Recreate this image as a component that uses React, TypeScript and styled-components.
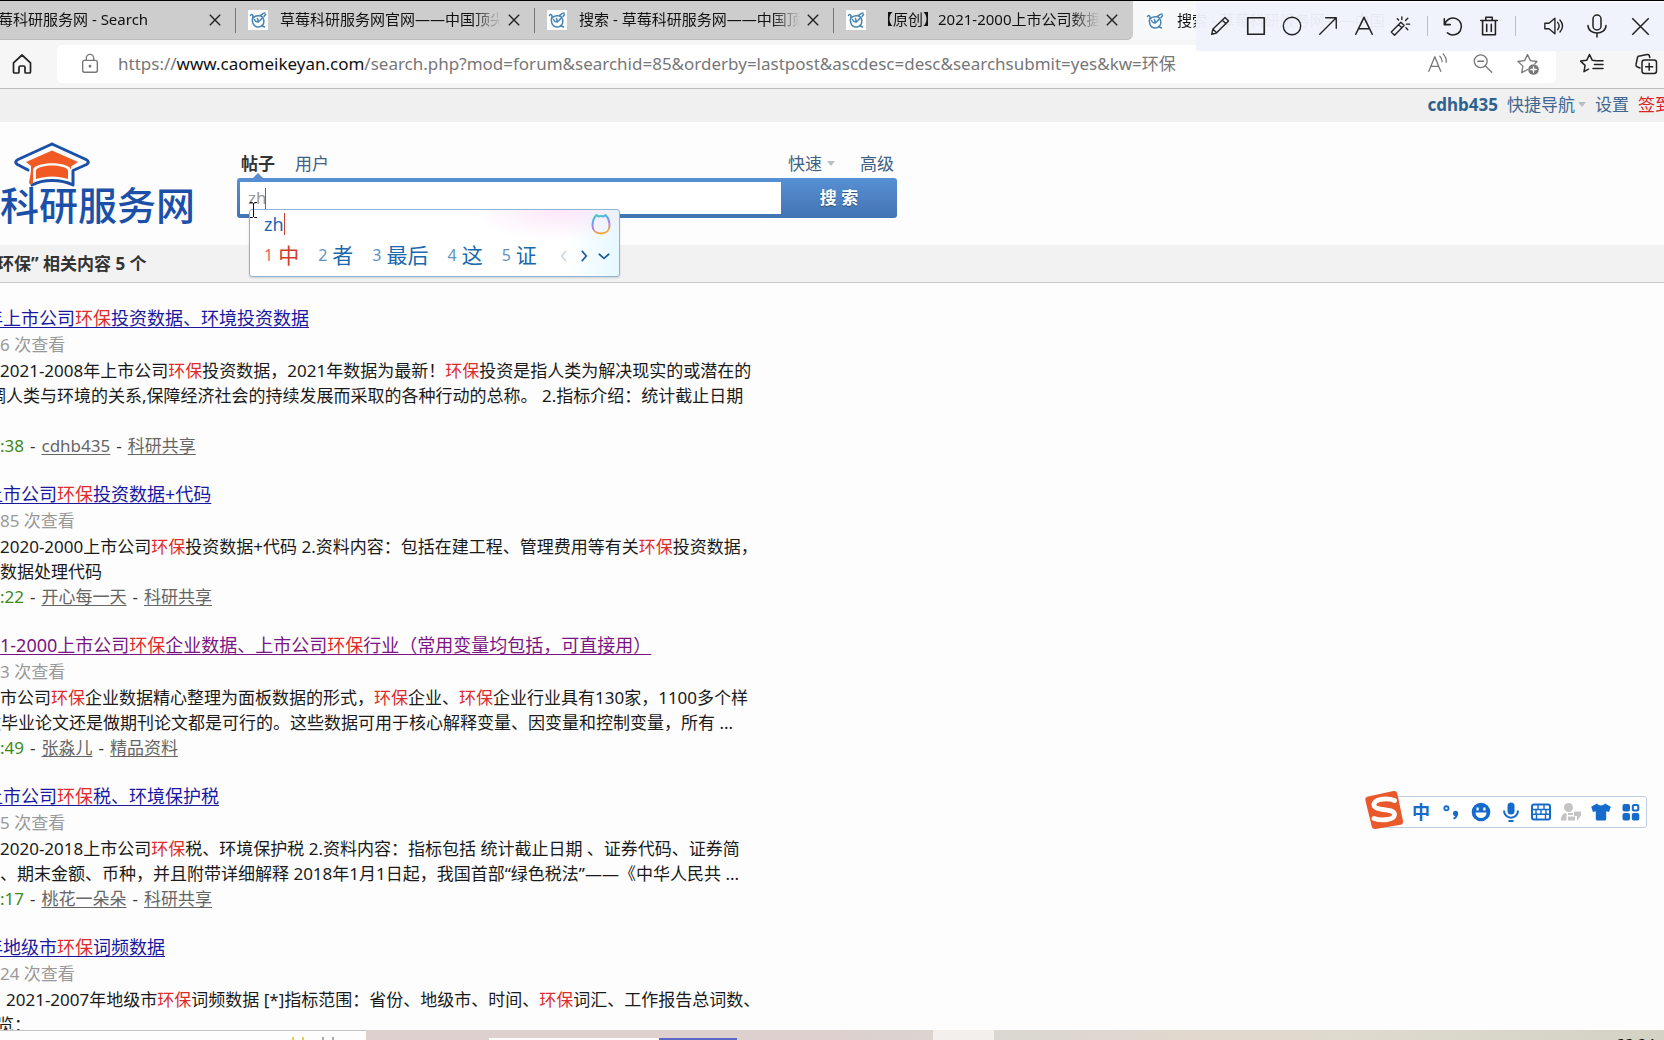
import React from "react";
import styled, { createGlobalStyle } from "styled-components";

const GlobalStyle = createGlobalStyle`
  *, *::before, *::after { box-sizing: border-box; }
  body {
    margin: 0;
    background: #fdfdfd;
    color: #1a1a1a;
    font: 17px/25px "Noto Sans", "Noto Sans CJK SC", sans-serif;
  }
  button, input { font: inherit; color: inherit; }
  button { padding: 0; border: 0; background: none; cursor: pointer; }
  svg { display: block; }
`;

/* ---------- shell ---------- */

const Shell = styled.div`
  display: flex;
  flex-direction: column;
  height: 100vh;
  overflow: hidden;
  position: relative;
`;

/* ---------- browser tabs ---------- */

const TabStrip = styled.div`
  display: flex;
  height: 40px;
  flex: none;
  background: #f7f8fa;
  border-top: 1px solid #000;
`;

const Tabs = styled.div`
  display: flex;
  background: #cdcdcd;
  border-bottom: 1px solid #bdbdbd;
  border-radius: 0 0 6px 0;
`;

const Tab = styled.div<{ $first?: boolean; $last?: boolean }>`
  display: flex;
  align-items: center;
  width: ${(p) => (p.$first ? 236 : 299)}px;
  padding: ${(p) => (p.$first ? "0 12px 0 0" : "0 12px")};
  position: relative;
  &::after {
    content: "";
    width: 1px;
    height: 25px;
    position: absolute;
    right: 0;
    top: 7px;
    background: ${(p) => (p.$last ? "transparent" : "#777")};
  }
`;

const ActiveTab = styled(Tab)`
  flex: 1;
  width: auto;
  min-width: 0;
`;

const TabTitle = styled.span<{ $cut?: number }>`
  flex: 1;
  min-width: 0;
  margin-left: ${(p) => (p.$cut ? 0 : 12)}px;
  padding-bottom: 2px;
  text-indent: -${(p) => p.$cut ?? 0}px;
  overflow: hidden;
  white-space: nowrap;
  font-size: 15px;
  line-height: 24px;
  color: #111;
  mask-image: linear-gradient(to right, #000 calc(100% - 28px), transparent);
`;

const CloseButton = styled.button`
  display: grid;
  place-items: center;
  width: 18px;
  height: 18px;
  margin-left: 4px;
  color: #222;
`;

const FaviconBox = styled.span`
  flex: none;
  width: 20px;
  height: 20px;
  background: #fdfdfd;
`;

const Favicon = () => (
  <FaviconBox>
    <svg width="20" height="20" viewBox="0 0 20 20" fill="none" stroke="#4585b5" strokeWidth="1.5" strokeLinecap="round">
      <path d="M2.500 5.500c1-1.800 2.800-1 2.500 1C3.500 10.500 4.500 16.500 9.500 17c4.500.4 6.700-3 6.300-6.500-.3-2.500-2-4.500-4.500-4.700C9 5.500 6.500 6 5 8" />
      <path d="M12 5.500c1.500.3 2-2.500 5-2.500M16 6.500l1.500-2M6.500 9.500c1 2.500 3 3 5 1.500 1-.8 1.500-2 2.500-2.500M9.500 8.500l1 3.500M13.500 15.500l3 1.500" />
    </svg>
  </FaviconBox>
);

const Cross = ({ size = 12, width = 1.4 }: { size?: number; width?: number }) => (
  <svg width={size} height={size} viewBox="0 0 12 12" stroke="currentColor" strokeWidth={(width * 12) / size} fill="none">
    <path d="M.8.8l10.400 10.400M11.200.8L.8 11.200" />
  </svg>
);

/* ---------- address bar ---------- */

const Toolbar = styled.div`
  display: flex;
  align-items: center;
  flex: none;
  height: 49px;
  padding: 0 6px 0 10px;
  background: #f6f6f7;
  border-bottom: 1px solid #bcbcbc;
`;

const IconButton = styled.button<{ $muted?: boolean }>`
  display: grid;
  place-items: center;
  flex: none;
  width: 24px;
  height: 24px;
  color: ${(p) => (p.$muted ? "#777" : "#222")};
`;

const Address = styled.div`
  display: flex;
  align-items: center;
  flex: 1;
  min-width: 0;
  height: 38px;
  margin: 0 24px 0 23px;
  padding: 0 16px 0 21px;
  gap: 21px;
  border-radius: 5px;
  background: #fff;
`;

const Url = styled.span`
  flex: 1;
  min-width: 0;
  margin-left: -5px;
  padding-bottom: 2px;
  overflow: hidden;
  white-space: nowrap;
  color: #777;
  b { font-weight: 400; color: #111; }
`;

const RightTools = styled.div`
  display: flex;
  gap: 30px;
`;

/* ---------- annotation toolbar ---------- */

const Annotator = styled.div`
  position: absolute;
  top: 3px;
  right: 0;
  display: flex;
  align-items: center;
  width: 468px;
  height: 48px;
  padding: 0 10px 2px 12px;
  background: rgba(239, 243, 251, 0.96);
`;

const ToolGroup = styled.div<{ $wide?: boolean }>`
  display: flex;
  gap: ${(p) => (p.$wide ? 19 : 12)}px;
`;

const ToolDivider = styled.span<{ $wide?: boolean }>`
  width: 1px;
  height: 20px;
  margin: ${(p) => (p.$wide ? "0 26px 0 14px" : "0 13px 0 15px")};
  background: #b9bfcc;
`;

const Stroke = ({ children, size = 22, w = 1.5 }: { children: React.ReactNode; size?: number; w?: number }) => (
  <svg width={size} height={size} viewBox="0 0 24 24" fill="none" stroke="currentColor" strokeWidth={w} strokeLinecap="round" strokeLinejoin="round">
    {children}
  </svg>
);

/* ---------- site ---------- */

const UserBar = styled.nav`
  display: flex;
  align-items: center;
  justify-content: flex-end;
  gap: 9px;
  flex: none;
  height: 33px;
  margin-right: -8px;
  padding-bottom: 2px;
  background: #f0f0f0;
  overflow: hidden;
`;

const NavLink = styled.a<{ $strong?: boolean; $alert?: boolean }>`
  display: inline-flex;
  align-items: center;
  gap: 3px;
  white-space: nowrap;
  text-decoration: none;
  font-weight: ${(p) => (p.$strong ? 700 : 400)};
  color: ${(p) => (p.$alert ? "#d8232a" : p.$strong ? "#2d628f" : "#3f6790")};
`;

const Caret = styled.i`
  border: 4px solid transparent;
  border-top: 5px solid #b8bec4;
  border-bottom: 0;
`;

const Header = styled.header`
  display: flex;
  flex: none;
  height: 123px;
`;

const Logo = styled.a`
  width: 237px;
  flex: none;
  padding-top: 20px;
  color: #1c50a8;
  text-decoration: none;
  overflow: hidden;
  svg { margin-left: 14px; }
`;

const LogoName = styled.span`
  display: block;
  white-space: nowrap;
  font-size: 39px;
  line-height: 34px;
  font-weight: 500;
`;

const SearchForm = styled.form`
  position: relative;
  width: 660px;
  padding-top: 29px;
`;

const SearchTabs = styled.div`
  display: flex;
  gap: 20px;
  height: 27px;
  padding: 0 3px 0 4px;
`;

const SearchTab = styled.button<{ $active?: boolean; $menu?: boolean }>`
  position: relative;
  display: flex;
  align-items: center;
  gap: 5px;
  height: 24px;
  padding-right: ${(p) => (p.$menu ? 5 : 0)}px;
  font-weight: ${(p) => (p.$active ? 700 : 400)};
  color: ${(p) => (p.$active ? "#333" : "#3f5f83")};
  &::after {
    content: "";
    display: ${(p) => (p.$active ? "block" : "none")};
    position: absolute;
    left: 12px;
    bottom: -3px;
    border: 5px solid transparent;
    border-bottom: 5px solid #5a8cc8;
    border-top: 0;
  }
`;

const Spacer = styled.span`
  flex: 1;
`;

const SearchBox = styled.div`
  display: flex;
  height: 40px;
  border-radius: 3px;
  padding: 4px 0 4px 3px;
  background: linear-gradient(#5790d4, #4274b3);
`;

const SearchInput = styled.input`
  flex: 1;
  min-width: 0;
  padding: 0 8px 2px;
  border: 0;
  outline: 0;
  background: #fff;
  color: #999;
`;

const SearchButton = styled.button`
  width: 116px;
  margin: -4px 0;
  padding-bottom: 2px;
  font-weight: 700;
  color: #fff;
  text-shadow: 0 1px 1px rgba(0, 0, 0, 0.4);
`;

const TextCaret = styled.i<{ $color: string }>`
  width: 1px;
  height: 22px;
  background: ${(p) => p.$color};
`;

const InputCaret = styled(TextCaret)`
  position: absolute;
  left: 28px;
  top: 66px;
`;

const MouseBeam = styled.svg`
  position: absolute;
  left: 12px;
  top: 80px;
`;

const ImePanel = styled.div`
  position: absolute;
  left: 12px;
  top: 87px;
  width: 371px;
  height: 68px;
  padding: 1px 8px 0 14px;
  border: 1px solid #8fb4d6;
  border-radius: 3px;
  background:
    radial-gradient(ellipse 90px 30px at 84% 0, rgba(250, 220, 246, 0.7), transparent),
    linear-gradient(to left, #e6f8ff, #fff 14%);
  box-shadow: 0 1px 2px rgba(0, 0, 0, 0.15);
`;

const ImeRow = styled.div`
  display: flex;
  align-items: center;
  height: 26px;
  font-size: 18px;
  color: #1a66b5;
`;

const Candidates = styled.ol`
  display: flex;
  align-items: center;
  gap: 19px;
  height: 36px;
  margin: 0;
  padding: 0;
  list-style: none;
`;

const Candidate = styled.li<{ $first?: boolean }>`
  display: flex;
  align-items: center;
  gap: 5px;
  font-size: 21px;
  white-space: nowrap;
  color: ${(p) => (p.$first ? "#d23c2a" : "#1a68ae")};
  small {
    font-size: 16px;
    color: ${(p) => (p.$first ? "#e2695a" : "#5e93c0")};
  }
`;

const Pager = styled.li`
  display: flex;
  gap: 5px;
  margin-left: auto;
`;

const PagerButton = styled.button<{ $dim?: boolean }>`
  width: 15px;
  height: 12px;
  display: grid;
  place-items: center;
  color: ${(p) => (p.$dim ? "#c6d6e4" : "#1f5f9c")};
`;

const Summary = styled.h2<{ $cut: number }>`
  flex: none;
  height: 38px;
  margin: 0;
  border-bottom: 1px solid #c6c6c6;
  background: #f2f2f2;
  font-size: 17px;
  line-height: 37px;
  color: #333;
  white-space: nowrap;
  text-indent: -${(p) => p.$cut}px;
`;

/* ---------- results ---------- */

const Results = styled.main`
  flex: 1;
  min-height: 0;
  padding-top: 22px;
  overflow: hidden;
`;

const Result = styled.article`
  margin-bottom: 23px;
  white-space: nowrap;
`;

const ResultTitle = styled.h3<{ $cut: number }>`
  margin: 0;
  font-size: 18px;
  line-height: 27px;
  font-weight: 400;
  text-indent: -${(p) => p.$cut}px;
`;

const TitleLink = styled.a<{ $visited?: boolean }>`
  color: ${(p) => (p.$visited ? "#7a1583" : "#1a17a0")};
  text-underline-offset: 2px;
`;

const Views = styled.p`
  margin: 0;
  line-height: 26px;
  color: #999;
`;

const Line = styled.p<{ $cut?: number }>`
  margin: 0;
  min-height: 25px;
  text-indent: ${(p) => -(p.$cut ?? 0)}px;
`;

const Mark = styled.em`
  font-style: normal;
  color: #dd2c2c;
`;

const Meta = styled.p`
  display: flex;
  gap: 6px;
  margin: 0;
  color: #333;
  time { color: #3c8a14; }
  a { color: #666; text-underline-offset: 2px; }
`;

type Text = { t: string; cut?: number };
type Item = {
  title: Text;
  visited?: boolean;
  views: string;
  lines: Text[];
  time: string;
  author: string;
  board: string;
};

const items: Item[] = [
  {
    title: { t: "年上市公司*环保*投资数据、环境投资数据", cut: 15 },
    views: "6 次查看",
    lines: [
      { t: "2021-2008年上市公司*环保*投资数据，2021年数据为最新！*环保*投资是指人类为解决现实的或潜在的" },
      { t: "调人类与环境的关系,保障经济社会的持续发展而采取的各种行动的总称。 2.指标介绍：统计截止日期", cut: 11 },
      { t: "" },
    ],
    time: ":38",
    author: "cdhb435",
    board: "科研共享",
  },
  {
    title: { t: "上市公司*环保*投资数据+代码", cut: 15 },
    views: "85 次查看",
    lines: [
      { t: "2020-2000上市公司*环保*投资数据+代码 2.资料内容：包括在建工程、管理费用等有关*环保*投资数据，" },
      { t: "数据处理代码" },
    ],
    time: ":22",
    author: "开心每一天",
    board: "科研共享",
  },
  {
    title: { t: "1-2000上市公司*环保*企业数据、上市公司*环保*行业（常用变量均包括，可直接用）", cut: 0 },
    visited: true,
    views: "3 次查看",
    lines: [
      { t: "市公司*环保*企业数据精心整理为面板数据的形式，*环保*企业、*环保*企业行业具有130家，1100多个样" },
      { t: "做毕业论文还是做期刊论文都是可行的。这些数据可用于核心解释变量、因变量和控制变量，所有 ...", cut: 16 },
    ],
    time: ":49",
    author: "张淼儿",
    board: "精品资料",
  },
  {
    title: { t: "上市公司*环保*税、环境保护税", cut: 15 },
    views: "5 次查看",
    lines: [
      { t: "2020-2018上市公司*环保*税、环境保护税 2.资料内容：指标包括 统计截止日期 、证券代码、证券简" },
      { t: "、期末金额、币种，并且附带详细解释 2018年1月1日起，我国首部“绿色税法”——《中华人民共 ..." },
    ],
    time: ":17",
    author: "桃花一朵朵",
    board: "科研共享",
  },
  {
    title: { t: "年地级市*环保*词频数据", cut: 15 },
    views: "24 次查看",
    lines: [
      { t: "2021-2007年地级市*环保*词频数据 [*]指标范围：省份、地级市、时间、*环保*词汇、工作报告总词数、", cut: -6 },
      { t: "览：", cut: 3 },
    ],
    time: "",
    author: "",
    board: "",
  },
];

/* Wraps every *环保* in the highlight colour. */
const highlight = (text: string) =>
  text.split("*环保*").flatMap((part, i) => (i === 0 ? [part] : [<Mark key={i}>环保</Mark>, part]));

/* ---------- input-method bar and taskbar ---------- */

const ImeBar = styled.div`
  position: absolute;
  right: 17px;
  top: 796px;
  display: flex;
  align-items: center;
  gap: 8px;
  width: 272px;
  height: 32px;
  padding: 0 4px 0 34px;
  border: 1px solid #bcd0e4;
  border-radius: 3px;
  background: #fff;
  color: #146bcb;
`;

const ImeLogo = styled.svg`
  position: absolute;
  left: -12px;
  top: -7px;
`;

const ImeButton = styled.button<{ $off?: boolean }>`
  display: grid;
  place-items: center;
  flex: none;
  width: 22px;
  height: 24px;
  font-weight: 700;
  font-size: 18px;
  color: ${(p) => (p.$off ? "#c4c4c4" : "inherit")};
`;

const Taskbar = styled.footer`
  display: flex;
  flex: none;
  height: 10px;
  overflow: hidden;
  background: linear-gradient(to right, #ddd0ce 22%, #ddd0ce 50%, #dad7d2 60%, #e2d8ce 72%, #dedbce 82%, #d3d2c3);
`;

const TaskSearch = styled.div`
  display: flex;
  justify-content: flex-end;
  align-items: flex-end;
  gap: 8px;
  width: 366px;
  padding-right: 32px;
  border-top: 1px solid #c4c4c4;
  background: #fdfdfd;
`;

const Spark = styled.i<{ $color: string }>`
  width: 2px;
  height: 3px;
  background: ${(p) => p.$color};
`;

const TaskThumb = styled.div`
  display: flex;
  align-items: flex-end;
  margin-left: 123px;
  &::before { content: ""; width: 170px; height: 2px; background: #fdfdfd; }
  &::after { content: ""; width: 78px; height: 2px; background: #5a67c6; }
`;

const TaskActive = styled.div`
  width: 61px;
  margin-left: 196px;
  background: #f2efed;
`;

const Clock = styled.time`
  margin: 5px 9px 0 auto;
  font-size: 15px;
  line-height: 16px;
  color: #111;
`;

/* ---------- app ---------- */

export default function App() {
  return (
    <Shell lang="zh-CN">
      <GlobalStyle />
      <TabStrip>
        <Tabs>
          <Tab $first>
            <TabTitle $cut={2}>莓科研服务网 - Search</TabTitle>
            <CloseButton aria-label="关闭标签页"><Cross /></CloseButton>
          </Tab>
          {["草莓科研服务网官网——中国顶尖", "搜索 - 草莓科研服务网——中国顶", "【原创】2021-2000上市公司数据"].map((title, i) => (
            <Tab key={title} $last={i === 2}>
              <Favicon />
              <TabTitle>{title}</TabTitle>
              <CloseButton aria-label="关闭标签页"><Cross /></CloseButton>
            </Tab>
          ))}
        </Tabs>
        <ActiveTab $last>
          <Favicon />
          <TabTitle>搜索 - 草莓科研服务网——中国</TabTitle>
        </ActiveTab>
      </TabStrip>

      <Toolbar>
        <IconButton aria-label="主页">
          <Stroke size={24} w={1.7}>
            <path d="M3.500 10.800L12 3l8.500 7.800V20a1 1 0 0 1-1 1H16a1 1 0 0 1-1-1v-4.500a1.500 1.500 0 0 0-1.500-1.500h-3A1.500 1.500 0 0 0 9 15.500V20a1 1 0 0 1-1 1H4.500a1 1 0 0 1-1-1z" />
          </Stroke>
        </IconButton>
        <Address>
          <IconButton aria-label="网站信息" $muted>
            <Stroke size={22} w={1.5}>
              <rect x="4" y="8" width="16" height="13" rx="2" />
              <path d="M8 8V5.500a4 4 0 0 1 8 0V8" />
              <circle cx="12" cy="14.500" r=".8" fill="currentColor" />
            </Stroke>
          </IconButton>
          <Url>
            https://<b>www.caomeikeyan.com</b>/search.php?mod=forum&amp;searchid=85&amp;orderby=lastpost&amp;ascdesc=desc&amp;searchsubmit=yes&amp;kw=环保
          </Url>
          <IconButton aria-label="大声朗读" $muted>
            <Stroke size={22} w={1.4}>
              <path d="M2 20L8.500 4 15 20M4.400 14.500h8.200M14 3.500c1.800 1.500 2.500 3.500 2.500 6M17.500 1c2.500 2.500 3.700 5.500 3.500 9" />
            </Stroke>
          </IconButton>
          <IconButton aria-label="缩小" $muted>
            <Stroke size={22} w={1.4}>
              <circle cx="9.500" cy="9" r="7" />
              <path d="M14.700 14.200L21.500 21M6.300 9h6.400" />
            </Stroke>
          </IconButton>
          <IconButton aria-label="添加到收藏夹" $muted>
            <Stroke size={24} w={1.3}>
              <path d="M11.500 17.500l-5.800 3.200 1.200-6.600-4.900-4.600 6.600-.9L11.500 2.500l2.900 6.100 6.600.9-2 2" />
              <circle cx="17.500" cy="17.500" r="5.300" fill="#777" stroke="none" />
              <path d="M17.500 14.800v5.400M14.800 17.500h5.400" stroke="#fff" />
            </Stroke>
          </IconButton>
        </Address>
        <RightTools>
          <IconButton aria-label="收藏夹">
            <Stroke size={24} w={1.5}>
              <path d="M16 8.800l-3.700-.5L9.500 2.500 6.700 8.300l-6.200.8 4.600 4.300L4 19.700l4.500-2.500M14.500 12.500H23M13 16.500h10M17 8.800h6" />
            </Stroke>
          </IconButton>
          <IconButton aria-label="集锦">
            <Stroke size={24} w={1.5}>
              <path d="M6 16l-3-1.200A2 2 0 0 1 2 12.500L3.500 5.500A2 2 0 0 1 5.800 4L13 2.500a2 2 0 0 1 2.400 1.500l.4 1.500" />
              <rect x="8" y="8" width="14.500" height="13.500" rx="2.500" />
              <path d="M15.200 11.200v7M11.700 14.700h7" />
            </Stroke>
          </IconButton>
        </RightTools>
      </Toolbar>

      <UserBar>
        <NavLink href="#" $strong>cdhb435</NavLink>
        <NavLink href="#">快捷导航<Caret /></NavLink>
        <NavLink href="#">设置</NavLink>
        <NavLink href="#" $alert>签到</NavLink>
      </UserBar>

      <Header>
        <Logo href="#">
          <svg width="76" height="46" viewBox="0 0 76 46" fill="none">
            <path d="M38 2L4 17.500c-3 1.500-3 3.500-.5 5L14 28M38 2l34 15.500c3 1.500 3 3.500.5 5L59 28.500V43c-12-6-30-6-41 0" stroke="#1c50a8" strokeWidth="3" strokeLinejoin="round" strokeLinecap="round" />
            <path d="M38 8.500L12 20l5 4v5l-2 12c1.500 2 3 1.500 4-.5L19 28c1-9 37-9 38 0v-3.500L64 20z" fill="#f15a22" />
            <path d="M22 28c4-6 28-6 32 0v9c-10-3.500-22-3.500-32 0z" fill="#f15a22" />
          </svg>
          <LogoName>科研服务网</LogoName>
        </Logo>
        <SearchForm onSubmit={(e) => e.preventDefault()}>
          <SearchTabs>
            <SearchTab type="button" $active>帖子</SearchTab>
            <SearchTab type="button">用户</SearchTab>
            <Spacer />
            <SearchTab type="button" $menu>快速<Caret /></SearchTab>
            <SearchTab type="button">高级</SearchTab>
          </SearchTabs>
          <SearchBox>
            <SearchInput aria-label="搜索" defaultValue="zh" />
            <SearchButton type="submit">搜 索</SearchButton>
          </SearchBox>
          <InputCaret $color="#666" />
          <ImePanel>
            <ImeRow>
              zh<TextCaret $color="#d23c2a" />
              <Spacer />
              <svg width="20" height="22" viewBox="0 0 20 22" fill="none" strokeWidth="2" strokeLinecap="round">
                <defs>
                  <linearGradient id="ring" x1="0" y1="0" x2="0.3" y2="1">
                    <stop offset="0" stopColor="#3fd0b8" />
                    <stop offset=".35" stopColor="#58a8ee" />
                    <stop offset=".65" stopColor="#b57be8" />
                    <stop offset="1" stopColor="#f5a63c" />
                  </linearGradient>
                </defs>
                <path d="M7.500 3.500L5.500 2C3 4.500 1.500 8.500 1.500 12.500c0 5 3.500 8 8.500 8s8.500-3 8.500-8c0-4-1.500-8-4-10.500l-2 1.500c-1.500-.5-3.500-.5-5 0z" stroke="url(#ring)" />
              </svg>
            </ImeRow>
            <Candidates>
              {["中", "者", "最后", "这", "证"].map((word, i) => (
                <Candidate key={word} $first={i === 0}><small>{i + 1}</small>{word}</Candidate>
              ))}
              <Pager>
                <PagerButton type="button" aria-label="上一页" $dim><Stroke size={14} w={2.5}><path d="M15 4l-7 8 7 8" /></Stroke></PagerButton>
                <PagerButton type="button" aria-label="下一页"><Stroke size={14} w={3}><path d="M9 4l7 8-7 8" /></Stroke></PagerButton>
                <PagerButton type="button" aria-label="更多"><Stroke size={14} w={3}><path d="M4 9l8 7 8-7" /></Stroke></PagerButton>
              </Pager>
            </Candidates>
          </ImePanel>
          <MouseBeam width="9" height="16" viewBox="0 0 9 16" stroke="#111" fill="none">
            <path d="M1 .5h2.500l1 1 1-1H8M4.500 1v14M1 15.500h2.500l1-1 1 1H8" />
          </MouseBeam>
        </SearchForm>
      </Header>

      <Summary $cut={3}>环保” 相关内容 5 个</Summary>

      <Results>
        {items.map((item) => (
          <Result key={item.title.t}>
            <ResultTitle $cut={item.title.cut ?? 0}>
              <TitleLink href="#" $visited={item.visited}>{highlight(item.title.t)}</TitleLink>
            </ResultTitle>
            <Views>{item.views}</Views>
            {item.lines.map((line, i) => (
              <Line key={i} $cut={line.cut}>{highlight(line.t)}</Line>
            ))}
            {item.time && (
              <Meta>
                <time>{item.time}</time>
                <span>-</span>
                <a href="#">{item.author}</a>
                <span>-</span>
                <a href="#">{item.board}</a>
              </Meta>
            )}
          </Result>
        ))}
      </Results>

      <Taskbar>
        <TaskSearch>
          <Spark $color="#e0cf5a" />
          <Spark $color="#e0cf5a" />
          <Spark $color="#fdfdfd" />
          <Spark $color="#aaa" />
          <Spark $color="#aaa" />
        </TaskSearch>
        <TaskThumb />
        <TaskActive />
        <Clock>22:24</Clock>
      </Taskbar>

      <Annotator>
        <ToolGroup>
          <IconButton aria-label="画笔"><Stroke><path d="M3 21l1.300-5.700L17.500 2.800l3.800 3.700L8 19.700zM14.500 5.500l4 4M4.500 15.500l4 4" /></Stroke></IconButton>
          <IconButton aria-label="矩形"><Stroke w={1.8}><path d="M3 3h18v18H3z" /></Stroke></IconButton>
          <IconButton aria-label="圆形"><Stroke><circle cx="12" cy="12" r="9.500" /></Stroke></IconButton>
          <IconButton aria-label="箭头"><Stroke><path d="M3 21L21 3M9.500 3H21v11.500" /></Stroke></IconButton>
          <IconButton aria-label="文字"><Stroke w={1.7}><path d="M3 21l9-18.500L21 21M6 15h12" /></Stroke></IconButton>
          <IconButton aria-label="魔棒"><Stroke><path d="M2.500 18.500L13 8l3.500 3.500L6 22zM10.500 10.500L14 14M14 2v3M18 6l2.500-2.500M19 10h3.500M18.500 14l2 2M9 4l1.500 1.500" /></Stroke></IconButton>
        </ToolGroup>
        <ToolDivider />
        <ToolGroup>
          <IconButton aria-label="撤销"><Stroke w={1.7}><path d="M2.500 4v6.500H9M3 10.500A9.200 9.200 0 1 1 6 19.500" /></Stroke></IconButton>
          <IconButton aria-label="删除"><Stroke w={1.7}><path d="M3 6h18M8.500 6V2.500h7V6M5 6v15.500h14V6M9.500 10v8M14.500 10v8" /></Stroke></IconButton>
        </ToolGroup>
        <ToolDivider $wide />
        <ToolGroup $wide>
          <IconButton aria-label="声音"><Stroke><path d="M2 9v6h4.500L13 20.500v-17L6.500 9zM16 8c2 2.500 2 5.500 0 8M18.500 5.500c3.500 4 3.500 9 0 13" /></Stroke></IconButton>
          <IconButton aria-label="麦克风"><Stroke size={24}><rect x="8" y="1" width="8" height="15" rx="4" /><path d="M3 11.500c0 10 18 10 18 0M12 19v4" /></Stroke></IconButton>
          <IconButton aria-label="关闭"><Cross size={19} width={1.5} /></IconButton>
        </ToolGroup>
      </Annotator>

      <ImeBar>
        <ImeLogo width="40" height="40" viewBox="0 0 40 40">
          <path d="M4 6.500L29.500 1q3-.5 3.800 2.300L39 31q.5 3-2.300 3.700L11.500 39q-3 .5-3.700-2.300L1.300 10q-.5-3 2.700-3.500z" fill="#e9592b" />
          <path d="M30.500 10.500C23 7.500 9 9 10 15.500c.8 5.500 19.500 2.500 20.500 8.500.8 5.500-11.500 7.500-20.500 4.500" fill="none" stroke="#fff" strokeWidth="4.800" strokeLinecap="round" />
        </ImeLogo>
        <ImeButton>中</ImeButton>
        <ImeButton aria-label="中文标点">
          <Stroke w={2}><circle cx="7" cy="8" r="2.300" /><circle cx="17" cy="13.500" r="1.800" fill="currentColor" /><path d="M18.500 14q0 3.500-3 5" /></Stroke>
        </ImeButton>
        <ImeButton aria-label="表情">
          <svg width="20" height="20" viewBox="0 0 20 20"><circle cx="10" cy="10" r="9.300" fill="currentColor" /><path d="M4.500 10.500h11a5.500 5.500 0 0 1-11 0zM5.500 5.500h2.200v3H5.500zM12.300 5.500h2.200v3h-2.200z" fill="#fff" /></svg>
        </ImeButton>
        <ImeButton aria-label="语音">
          <svg width="18" height="20" viewBox="0 0 18 20" fill="none" stroke="currentColor" strokeWidth="2"><rect x="5.500" y=".5" width="7" height="12" rx="3.500" fill="currentColor" stroke="none" /><path d="M2 8.500c0 9.500 14 9.500 14 0M6.500 19h5" /></svg>
        </ImeButton>
        <ImeButton aria-label="键盘">
          <svg width="20" height="18" viewBox="0 0 20 18" fill="none" stroke="currentColor" strokeWidth="2"><rect x="1" y="1.500" width="18" height="15" rx="2" /><path d="M1 6.500h18M1 11.300h18M7 2v5M13 2v5M5 7v4M10 7v4M15 7v4M5.500 11v5M14.500 11v5" strokeWidth="1.400" /></svg>
        </ImeButton>
        <ImeButton aria-label="账户" $off>
          <svg width="20" height="20" viewBox="0 0 20 20" fill="currentColor"><circle cx="7.500" cy="5.500" r="4.500" /><path d="M0 18.500c0-5 2-7.500 5.500-7.500v7.500zM7 11h5v2H7zM13 9.500h7v4l-4 5.500v-5h-3zM7 14.500h7v4H7z" /></svg>
        </ImeButton>
        <ImeButton aria-label="皮肤">
          <svg width="20" height="18" viewBox="0 0 20 18" fill="currentColor"><path d="M6 .5C7.500 3 12.500 3 14 .5l5.800 3.200L18 9l-2.800-.7V16q0 1.500-1.500 1.500H6.300q-1.500 0-1.500-1.500V8.300L2 9 .2 3.700z" /></svg>
        </ImeButton>
        <ImeButton aria-label="工具箱">
          <svg width="18" height="18" viewBox="0 0 18 18" fill="currentColor"><rect x=".5" y="1" width="7.500" height="7.500" rx="2" /><rect x=".5" y="10" width="7.500" height="7.500" rx="2" /><rect x="9.800" y="10" width="7.500" height="7.500" rx="2" /><rect x="10.800" y="2" width="5.500" height="5.500" rx="1.500" fill="none" stroke="currentColor" strokeWidth="2" /></svg>
        </ImeButton>
      </ImeBar>
    </Shell>
  );
}
